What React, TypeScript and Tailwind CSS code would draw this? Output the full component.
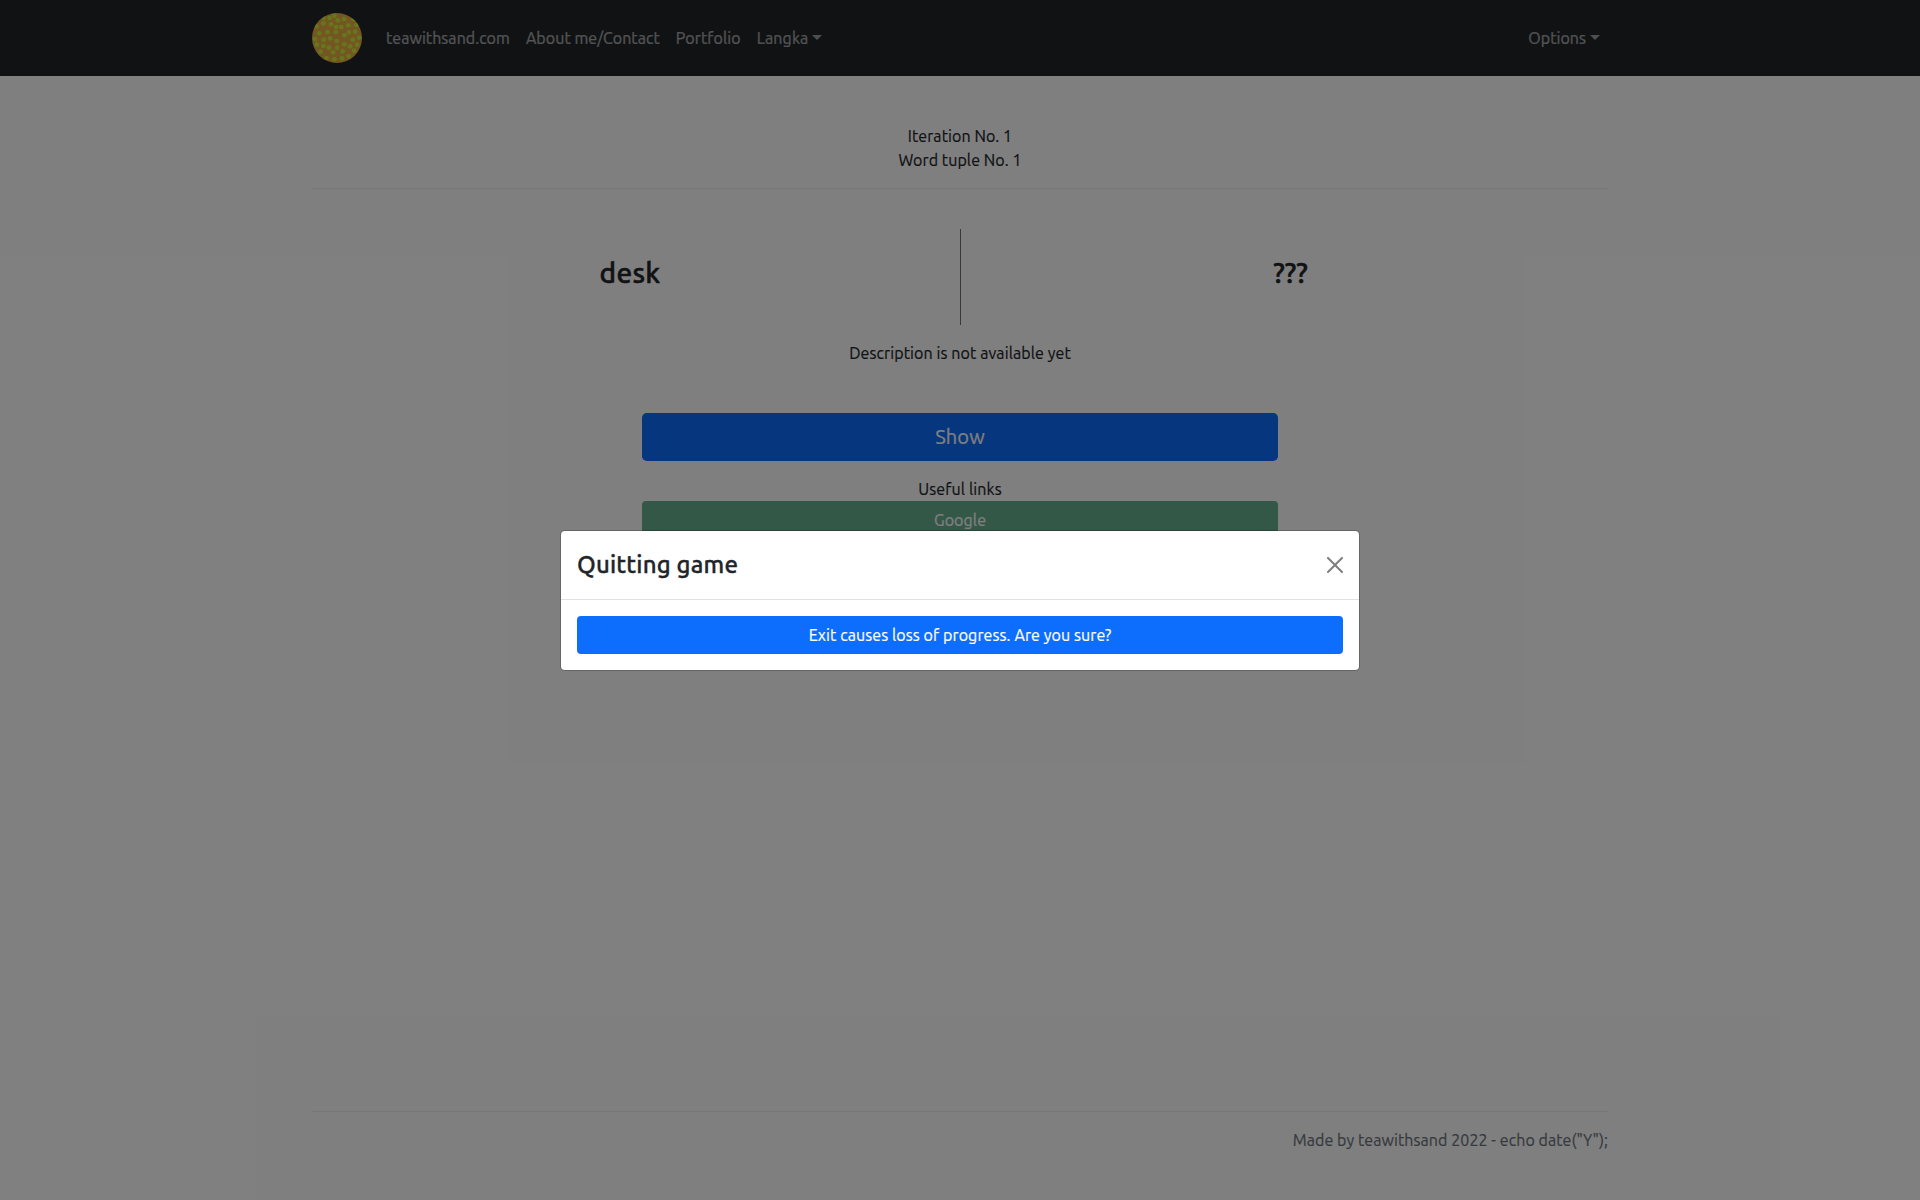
import type { ReactNode } from "react";

const dots: [number, number][] = [
  [100, 47], [86, 54], [128, 57], [110, 61], [155, 57], [68, 53], [68, 70], [90, 73],
  [140, 76], [164, 75], [105, 81], [120, 81], [48, 79], [56, 100], [80, 96], [104, 96],
  [142, 97], [160, 95], [129, 106], [88, 115], [172, 113], [44, 117], [69, 119],
  [107, 123], [153, 119], [49, 134], [68, 138], [129, 133], [166, 134], [84, 143],
  [146, 139], [108, 143], [60, 155], [96, 157], [124, 154], [157, 152], [141, 168],
  [77, 174], [100, 178], [122, 175],
];

function Logo() {
  return (
    <svg className="mr-6 h-[50px] w-[50px]" viewBox="35 39 145 150" preserveAspectRatio="none">
      <defs>
        <clipPath id="disc">
          <ellipse cx="107.5" cy="114" rx="72.5" ry="75" />
        </clipPath>
      </defs>
      <g clipPath="url(#disc)">
        <rect x="35" y="39" width="145" height="150" fill="#e6ac42" />
        {dots.map(([x, y]) => (
          <circle key={`${x}-${y}`} cx={x} cy={y} r="7" fill="#ceec38" />
        ))}
      </g>
    </svg>
  );
}

function Caret() {
  return (
    <span className="mb-px ml-1 inline-block border-x-[5px] border-t-[5px] border-x-transparent border-t-current align-middle" />
  );
}

function NavLink({ children }: { children: ReactNode }) {
  return (
    <a className="flex items-center whitespace-nowrap p-2 text-white/55" href="#">
      {children}
    </a>
  );
}

export default function App() {
  return (
    <div className="relative h-[1200px] w-full overflow-hidden bg-white font-['Ubuntu','Noto_Sans',sans-serif] text-base leading-6 text-[#212529] [-webkit-text-stroke:0.2px]">
      <nav className="flex h-[76px] items-center bg-[#212529]">
        <div className="mx-auto flex w-[1296px] items-center">
          <Logo />
          <div className="flex grow items-center">
            <a className="py-2 pr-2 tracking-[0.05px] text-white/55" href="#">teawithsand.com</a>
            <NavLink><span className="tracking-[0.06px]">About me/Contact</span></NavLink>
            <NavLink><span className="tracking-[0.1px]">Portfolio</span></NavLink>
            <NavLink><span className="tracking-[0.12px]">Langka</span><Caret /></NavLink>
          </div>
          <NavLink><span className="tracking-[0.05px]">Options</span><Caret /></NavLink>
        </div>
      </nav>

      <main className="mx-auto flex h-[1035px] w-[1296px] flex-col pt-12 text-center">
        <p className="tracking-[0.08px]">Iteration No. 1</p>
        <p className="tracking-[0.08px]">Word tuple No. 1</p>
        <hr className="mt-4 mb-10 border-t border-[#212529]/8" />
        <div className="-mx-3 grid h-24 grid-cols-2 text-[28px] font-medium leading-[34px] [-webkit-text-stroke:0.5px]">
          <h3 className="flex items-center justify-center pb-2 tracking-[0.3px]">desk</h3>
          <h3 className="flex items-center justify-center border-l border-[#6c757d] pb-2">???</h3>
        </div>
        <p className="mt-4 tracking-[0.1px]">Description is not available yet</p>
        <div className="mx-auto mt-12 flex w-[636px] flex-col">
          <button className="h-12 rounded-[4.8px] bg-[#0d6efd] text-xl tracking-[0.1px] text-white">Show</button>
          <p className="mt-4 tracking-[0.12px]">Useful links</p>
          <button className="h-[38px] rounded bg-[#198754] tracking-[0.1px] text-white opacity-65">Google</button>
        </div>
      </main>

      <footer className="mx-auto w-[1296px] border-t border-[#212529]/8 pt-4 text-right tracking-[0.07px] text-[#6c757d]">
        Made by teawithsand 2022 - echo date("Y");
      </footer>

      <div className="absolute inset-0 bg-black/50">
        <div className="mx-auto mt-[530px] w-[800px] rounded-[4.8px] border border-black/20 bg-white bg-clip-padding">
          <div className="flex h-[69px] items-center justify-between border-b border-[#dee2e6] px-4">
            <h4 className="text-2xl font-medium leading-9 tracking-[0.17px] [-webkit-text-stroke:0.35px]">Quitting game</h4>
            <button className="opacity-50" aria-label="Close">
              <svg className="h-4 w-4" viewBox="0 0 16 16" fill="#000">
                <path d="M.293.293a1 1 0 011.414 0L8 6.586 14.293.293a1 1 0 111.414 1.414L9.414 8l6.293 6.293a1 1 0 01-1.414 1.414L8 9.414l-6.293 6.293a1 1 0 01-1.414-1.414L6.586 8 .293 1.707a1 1 0 010-1.414z" />
              </svg>
            </button>
          </div>
          <div className="p-4">
            <button className="block h-[38px] w-full rounded bg-[#0d6efd] tracking-[0.1px] text-white">
              Exit causes loss of progress. Are you sure?
            </button>
          </div>
        </div>
      </div>
    </div>
  );
}
